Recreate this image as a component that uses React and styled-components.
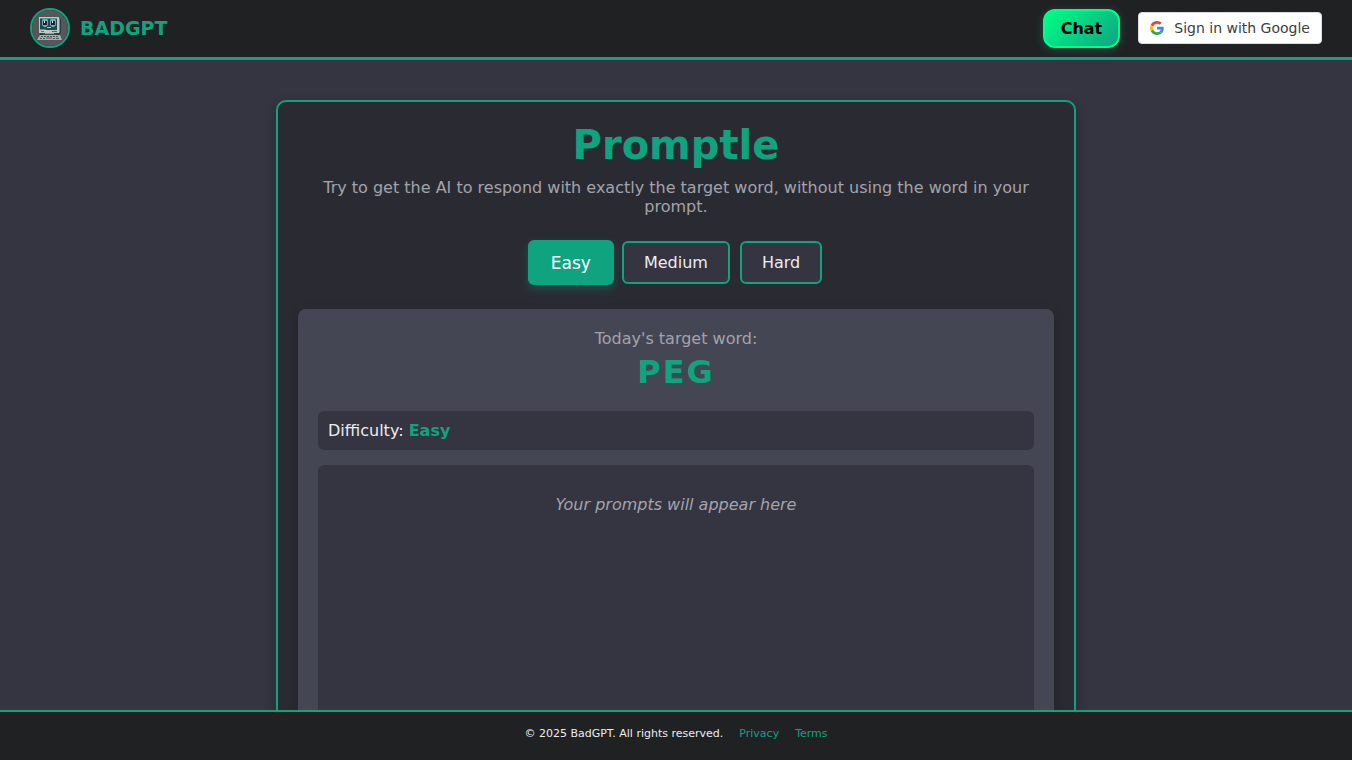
import React, { useState } from "react";
import styled, { createGlobalStyle } from "styled-components";

const GlobalStyle = createGlobalStyle`
  * {
    box-sizing: border-box;
  }
  body {
    margin: 0;
    background: #343541;
    color: #ececf1;
    font-family: "DejaVu Sans", Verdana, sans-serif;
    font-size: 16px;
    overflow: hidden;
  }
  button {
    font-family: inherit;
    cursor: pointer;
  }
`;

const levels = ["Easy", "Medium", "Hard"];
const words = { Easy: "PEG", Medium: "LANTERN", Hard: "PARADOX" };

function ComputerLogo() {
  return (
    <svg width="36" height="36" viewBox="0 0 36 36" aria-hidden="true">
      <rect width="36" height="36" fill="#55575a" />
      <path d="M8 8h20l1 2v13l-2 2H8z" fill="#2c3a40" />
      <path d="M7 7h20v16H7z" fill="#bcc8c5" />
      <path d="M27 8l1 1v13l-1 1z" fill="#7f8d8a" />
      <path d="M8 8h17v12H8z" fill="#1f4a52" />
      <path d="M8 8h17v1H8zM8 19h6v1H8z" fill="#4e968c" />
      <path d="M11 9h4l1 1v5l-2 2h-2l-2-2v-5zM19 9h4l1 1v5l-2 2h-2l-2-2v-5z" fill="#79a9b3" />
      <path d="M11 11h4v4h-4zM19 11h4v4h-4z" fill="#16242e" />
      <path d="M12 11h1v2h-1zM20 11h1v2h-1z" fill="#e6efee" />
      <path d="M15 17h4v1h-4z" fill="#a9c6c8" />
      <path d="M9 21h3v1H9z" fill="#4e8378" />
      <path d="M20 21h5v1h-5z" fill="#596561" />
      <path d="M11 23h13v2H11z" fill="#3d4a4c" />
      <path d="M13 23h9v1h-9z" fill="#8f9c9a" />
      <path d="M8 25h20l2 5H5z" fill="#a5b0ae" />
      <path
        d="M9 26h2v1H9zM12 26h2v1h-2zM15 26h2v1h-2zM18 26h2v1h-2zM21 26h2v1h-2zM24 26h2v1h-2zM8 28h2v1H8zM11 28h2v1h-2zM21 28h2v1h-2zM24 28h3v1h-3z"
        fill="#46555a"
      />
      <path d="M14 27h6v2h-6z" fill="#97757c" />
    </svg>
  );
}

function GoogleLogo() {
  return (
    <svg width="14" height="14" viewBox="0 0 48 48" aria-hidden="true">
      <path
        fill="#EA4335"
        d="M24 9.5c3.54 0 6.71 1.22 9.21 3.6l6.85-6.85C35.9 2.38 30.47 0 24 0 14.62 0 6.51 5.38 2.56 13.22l7.98 6.19C12.43 13.72 17.74 9.5 24 9.5z"
      />
      <path
        fill="#4285F4"
        d="M46.98 24.55c0-1.57-.15-3.09-.38-4.55H24v9.02h12.94c-.58 2.96-2.26 5.48-4.78 7.18l7.73 6c4.51-4.18 7.09-10.36 7.09-17.65z"
      />
      <path
        fill="#FBBC05"
        d="M10.53 28.59c-.48-1.45-.76-2.99-.76-4.59s.27-3.14.76-4.59l-7.98-6.19C.92 16.46 0 20.12 0 24c0 3.88.92 7.54 2.56 10.78l7.97-6.19z"
      />
      <path
        fill="#34A853"
        d="M24 48c6.48 0 11.93-2.13 15.89-5.81l-7.73-6c-2.15 1.45-4.92 2.3-8.16 2.3-6.26 0-11.57-4.22-13.47-9.91l-7.98 6.19C6.51 42.62 14.62 48 24 48z"
      />
    </svg>
  );
}

function App() {
  const [level, setLevel] = useState("Easy");

  return (
    <>
      <GlobalStyle />
      <Page>
        <Header>
          <Brand href="#">
            <Avatar>
              <ComputerLogo />
            </Avatar>
            BADGPT
          </Brand>
          <Actions>
            <ChatButton type="button">Chat</ChatButton>
            <GoogleButton type="button">
              <GoogleLogo />
              Sign in with Google
            </GoogleButton>
          </Actions>
        </Header>

        <Main>
          <GameCard>
            <Title>Promptle</Title>
            <Description>
              Try to get the AI to respond with exactly the target word, without
              using the word in your prompt.
            </Description>
            <Levels>
              {levels.map((name) => (
                <LevelButton
                  key={name}
                  type="button"
                  $active={name === level}
                  aria-pressed={name === level}
                  onClick={() => setLevel(name)}
                >
                  {name}
                </LevelButton>
              ))}
            </Levels>
            <GamePanel>
              <TargetLabel>Today's target word:</TargetLabel>
              <TargetWord>{words[level]}</TargetWord>
              <Difficulty>
                Difficulty: <strong>{level}</strong>
              </Difficulty>
              <History>
                <Placeholder>Your prompts will appear here</Placeholder>
              </History>
            </GamePanel>
          </GameCard>
        </Main>

        <Footer>
          <span>© 2025 BadGPT. All rights reserved.</span>
          <FooterLink href="#privacy">Privacy</FooterLink>
          <FooterLink href="#terms">Terms</FooterLink>
        </Footer>
      </Page>
    </>
  );
}

const Page = styled.div`
  height: 100vh;
  display: flex;
  flex-direction: column;
`;

const Header = styled.header`
  flex: none;
  display: flex;
  align-items: center;
  justify-content: space-between;
  padding: 8px 30px 9px;
  background: #202123;
  border-bottom: 3px solid #10a37f;
`;

const Brand = styled.a`
  display: flex;
  align-items: center;
  gap: 10px;
  color: #10a37f;
  font-size: 19px;
  font-weight: bold;
  text-decoration: none;
`;

const Avatar = styled.span`
  display: flex;
  width: 40px;
  height: 40px;
  border: 2px solid #10a37f;
  border-radius: 50%;
  overflow: hidden;
`;

const Actions = styled.div`
  display: flex;
  align-items: center;
  gap: 18px;
`;

const ChatButton = styled.button`
  padding: 8px 16px;
  color: #000;
  font-size: 16px;
  font-weight: bold;
  background: linear-gradient(135deg, #00ff88, #10a37f);
  border: 2px solid #00ff88;
  border-radius: 12px;
  box-shadow: 0 2px 8px rgba(16, 163, 127, 0.4);
`;

const GoogleButton = styled.button`
  display: flex;
  align-items: center;
  gap: 10px;
  height: 32px;
  padding: 0 11px;
  color: #3c4043;
  font-size: 14px;
  background: #fff;
  border: 1px solid #dadce0;
  border-radius: 4px;
`;

const Main = styled.main`
  flex: 1;
  min-height: 0;
  padding: 40px 20px;
  overflow: hidden;
`;

const GameCard = styled.section`
  max-width: 800px;
  margin: 0 auto;
  padding: 20px;
  text-align: center;
  background: #2a2b32;
  border: 2px solid #10a37f;
  border-radius: 10px;
  box-shadow: 0 4px 12px rgba(0, 0, 0, 0.2);
`;

const Title = styled.h1`
  margin: 0 0 10px;
  color: #10a37f;
  font-size: 40px;
`;

const Description = styled.p`
  margin: 0 0 25px;
  color: #a3a3ab;
`;

const Levels = styled.div`
  display: flex;
  justify-content: center;
  gap: 10px;
  margin-bottom: 25px;
`;

const LevelButton = styled.button`
  margin: ${(props) => (props.$active ? "-1px -2px" : "0")};
  padding: ${(props) => (props.$active ? "10px 21px" : "10px 20px")};
  color: ${(props) => (props.$active ? "#fff" : "#ececf1")};
  font-size: ${(props) => (props.$active ? "17px" : "16px")};
  background: ${(props) => (props.$active ? "#10a37f" : "#343541")};
  border: 2px solid #10a37f;
  border-radius: 6px;
  box-shadow: ${(props) =>
    props.$active ? "0 4px 8px rgba(16, 163, 127, 0.3)" : "none"};
`;

const GamePanel = styled.div`
  padding: 20px;
  background: #444654;
  border-radius: 8px;
  box-shadow: 0 4px 12px rgba(0, 0, 0, 0.2);
`;

const TargetLabel = styled.div`
  margin-bottom: 5px;
  color: #a3a3ab;
`;

const TargetWord = styled.div`
  margin-bottom: 20px;
  color: #10a37f;
  font-size: 32px;
  font-weight: bold;
  letter-spacing: 2px;
`;

const Difficulty = styled.div`
  margin-bottom: 15px;
  padding: 10px;
  text-align: left;
  background: #343541;
  border-radius: 6px;

  strong {
    color: #10a37f;
  }
`;

const History = styled.div`
  min-height: 300px;
  padding: 10px;
  background: #343541;
  border-radius: 6px;
`;

const Placeholder = styled.p`
  margin: 20px 0;
  color: #a3a3ab;
  font-style: italic;
`;

const Footer = styled.footer`
  flex: none;
  display: flex;
  align-items: center;
  justify-content: center;
  gap: 16px;
  height: 50px;
  padding-bottom: 6px;
  font-size: 11px;
  background: #202123;
  border-top: 2px solid #10a37f;
`;

const FooterLink = styled.a`
  color: #10a37f;
  text-decoration: none;
`;

export default App;
